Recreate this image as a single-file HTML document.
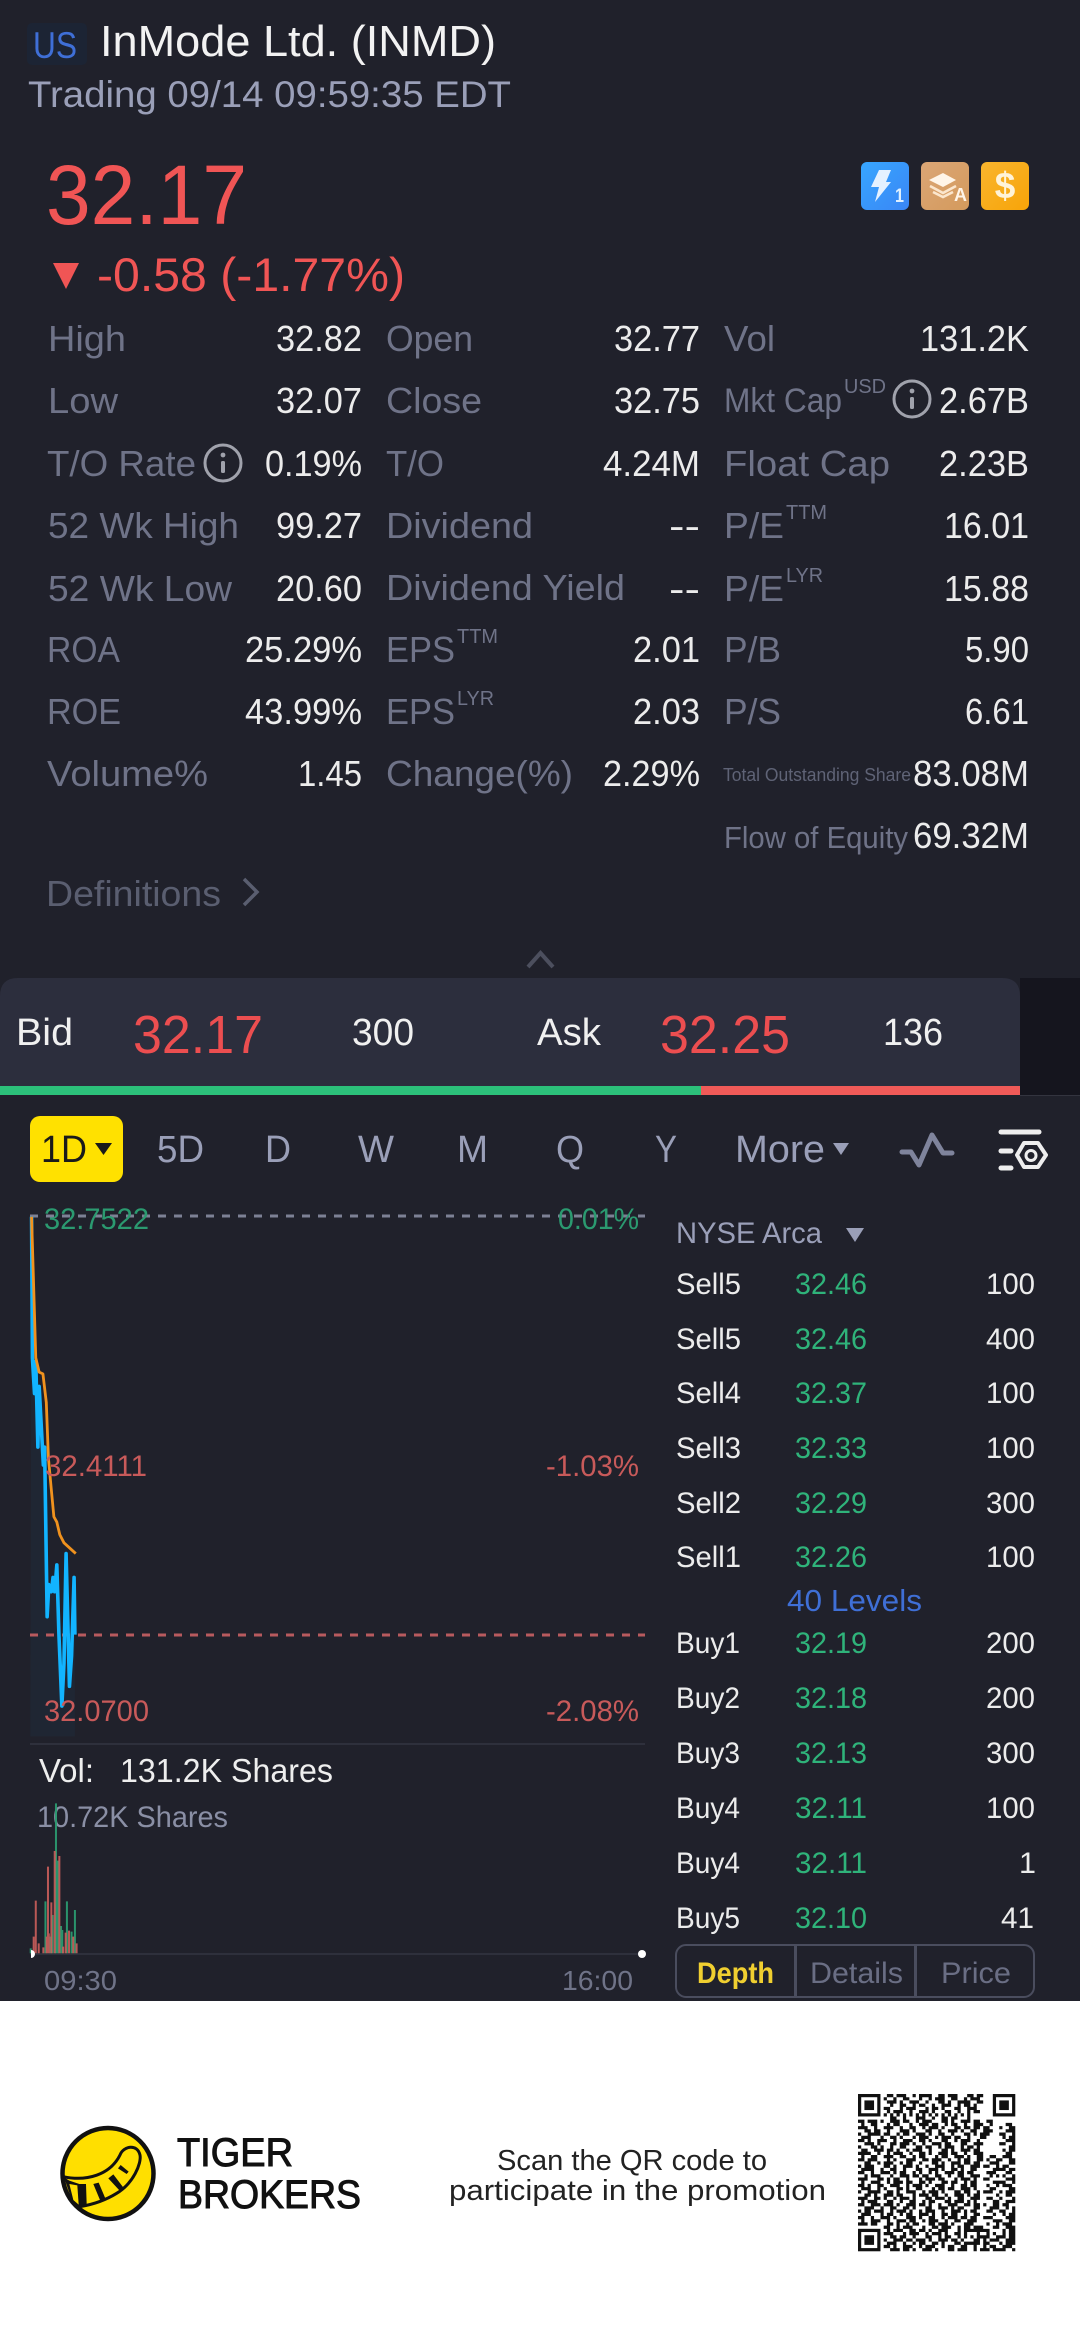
<!DOCTYPE html>
<html>
<head>
<meta charset="utf-8">
<title>InMode Ltd. (INMD)</title>
<style>
html,body{margin:0;padding:0;background:#20212b;width:1080px;height:2346px;overflow:hidden}
svg{display:block}
text{font-family:"Liberation Sans",sans-serif;white-space:pre}
.l{font-size:36px;fill:#6f7388}
.v{font-size:36px;fill:#ececec}
.s{font-size:20px;fill:#6f7388}
.d{font-size:30px;fill:#ececec}
.g{font-size:30px;fill:#2fb37a}
.t{font-size:38px;fill:#9a9fb8}
.cg{font-size:30px;fill:#2b9a70}
.cr{font-size:30px;fill:#c85a5a}
</style>
</head>
<body>
<svg xmlns="http://www.w3.org/2000/svg" width="1080" height="2346" viewBox="0 0 1080 2346">
<defs>
<linearGradient id="b1" x1="0" y1="0" x2="1" y2="1"><stop offset="0" stop-color="#37a6ff"/><stop offset="1" stop-color="#3a86f5"/></linearGradient>
<linearGradient id="b2" x1="0" y1="0" x2="1" y2="1"><stop offset="0" stop-color="#dba676"/><stop offset="1" stop-color="#d49a5c"/></linearGradient>
<linearGradient id="b3" x1="0" y1="0" x2="1" y2="1"><stop offset="0" stop-color="#f9b52e"/><stop offset="1" stop-color="#f8a408"/></linearGradient>
</defs>
<rect width="1080" height="2346" fill="#20212b"/>

<!-- header -->
<rect x="27" y="23" width="60" height="42" rx="5" fill="#1c2434"/>
<text x="33" y="58" font-size="37" fill="#3f6fd6" textLength="44" lengthAdjust="spacingAndGlyphs">US</text>
<text x="100" y="56" font-size="44" fill="#f2f2f2" textLength="396" lengthAdjust="spacingAndGlyphs">InMode Ltd. (INMD)</text>
<text x="28" y="107" font-size="37" fill="#9a9fb8" textLength="483" lengthAdjust="spacingAndGlyphs">Trading 09/14 09:59:35 EDT</text>

<text x="46" y="224" font-size="84" fill="#f05555" textLength="201" lengthAdjust="spacingAndGlyphs">32.17</text>
<polygon points="53,263 79,263 66,289" fill="#f05555"/>
<text x="97" y="291" font-size="47" fill="#f05555" textLength="308" lengthAdjust="spacingAndGlyphs">-0.58 (-1.77%)</text>

<!-- badges -->
<rect x="861" y="162" width="48" height="48" rx="6" fill="url(#b1)"/>
<polygon points="879,170 891,170 886,182 891,182 875,202 879,187 871,187" fill="#e4f1ff"/>
<text x="895" y="202" font-size="19" font-weight="bold" fill="#dff0ff" textLength="9" lengthAdjust="spacingAndGlyphs">1</text>
<rect x="921" y="162" width="48" height="48" rx="6" fill="url(#b2)"/>
<polygon points="943,173 956,180 943,187 929,180" fill="#fff5e8"/>
<path d="M930 186L943 193L956 186M933 192L943 197L953 192" fill="none" stroke="#fbe6cd" stroke-width="2.6"/>
<text x="954" y="201" font-size="18" font-weight="bold" fill="#fff5e8" textLength="13" lengthAdjust="spacingAndGlyphs">A</text>
<rect x="981" y="162" width="48" height="48" rx="6" fill="url(#b3)"/>
<text x="1005" y="198" font-size="37" font-weight="bold" fill="#fff3d8" text-anchor="middle">$</text>

<!-- stats -->
<g>
<text class="l" x="48" y="351" textLength="78" lengthAdjust="spacingAndGlyphs">High</text>
<text class="v" x="276" y="351" textLength="86" lengthAdjust="spacingAndGlyphs">32.82</text>
<text class="l" x="386" y="351" textLength="87" lengthAdjust="spacingAndGlyphs">Open</text>
<text class="v" x="614" y="351" textLength="86" lengthAdjust="spacingAndGlyphs">32.77</text>
<text class="l" x="724" y="351" textLength="51" lengthAdjust="spacingAndGlyphs">Vol</text>
<text class="v" x="920" y="351" textLength="109" lengthAdjust="spacingAndGlyphs">131.2K</text>

<text class="l" x="48" y="413" textLength="70" lengthAdjust="spacingAndGlyphs">Low</text>
<text class="v" x="276" y="413" textLength="86" lengthAdjust="spacingAndGlyphs">32.07</text>
<text class="l" x="386" y="413" textLength="96" lengthAdjust="spacingAndGlyphs">Close</text>
<text class="v" x="614" y="413" textLength="86" lengthAdjust="spacingAndGlyphs">32.75</text>
<text class="l" x="724" y="412" style="font-size:34px" textLength="118" lengthAdjust="spacingAndGlyphs">Mkt Cap</text>
<text class="s" x="844" y="393" textLength="42" lengthAdjust="spacingAndGlyphs">USD</text>
<circle cx="912" cy="399" r="18" fill="none" stroke="#a0a2ac" stroke-width="3"/>
<rect x="910" y="397" width="4" height="12" rx="1.5" fill="#a0a2ac"/><circle cx="912" cy="391" r="2.4" fill="#a0a2ac"/>
<text class="v" x="939" y="413" textLength="90" lengthAdjust="spacingAndGlyphs">2.67B</text>

<text class="l" x="47" y="476" textLength="149" lengthAdjust="spacingAndGlyphs">T/O Rate</text>
<circle cx="223" cy="463" r="18" fill="none" stroke="#a0a2ac" stroke-width="3"/>
<rect x="221" y="461" width="4" height="12" rx="1.5" fill="#a0a2ac"/><circle cx="223" cy="455" r="2.4" fill="#a0a2ac"/>
<text class="v" x="265" y="476" textLength="97" lengthAdjust="spacingAndGlyphs">0.19%</text>
<text class="l" x="386" y="476" textLength="58" lengthAdjust="spacingAndGlyphs">T/O</text>
<text class="v" x="603" y="476" textLength="97" lengthAdjust="spacingAndGlyphs">4.24M</text>
<text class="l" x="724" y="476" textLength="166" lengthAdjust="spacingAndGlyphs">Float Cap</text>
<text class="v" x="939" y="476" textLength="90" lengthAdjust="spacingAndGlyphs">2.23B</text>

<text class="l" x="48" y="538" textLength="191" lengthAdjust="spacingAndGlyphs">52 Wk High</text>
<text class="v" x="276" y="538" textLength="86" lengthAdjust="spacingAndGlyphs">99.27</text>
<text class="l" x="386" y="538" textLength="147" lengthAdjust="spacingAndGlyphs">Dividend</text>
<text class="v" x="669" y="538" textLength="31" lengthAdjust="spacingAndGlyphs">--</text>
<text class="l" x="724" y="538" textLength="60" lengthAdjust="spacingAndGlyphs">P/E</text>
<text class="s" x="786" y="519" textLength="41" lengthAdjust="spacingAndGlyphs">TTM</text>
<text class="v" x="944" y="538" textLength="85" lengthAdjust="spacingAndGlyphs">16.01</text>

<text class="l" x="48" y="601" textLength="184" lengthAdjust="spacingAndGlyphs">52 Wk Low</text>
<text class="v" x="276" y="601" textLength="86" lengthAdjust="spacingAndGlyphs">20.60</text>
<text class="l" x="386" y="600" textLength="239" lengthAdjust="spacingAndGlyphs">Dividend Yield</text>
<text class="v" x="669" y="601" textLength="31" lengthAdjust="spacingAndGlyphs">--</text>
<text class="l" x="724" y="601" textLength="60" lengthAdjust="spacingAndGlyphs">P/E</text>
<text class="s" x="786" y="582" textLength="37" lengthAdjust="spacingAndGlyphs">LYR</text>
<text class="v" x="944" y="601" textLength="85" lengthAdjust="spacingAndGlyphs">15.88</text>

<text class="l" x="47" y="662" textLength="73" lengthAdjust="spacingAndGlyphs">ROA</text>
<text class="v" x="245" y="662" textLength="117" lengthAdjust="spacingAndGlyphs">25.29%</text>
<text class="l" x="386" y="662" textLength="69" lengthAdjust="spacingAndGlyphs">EPS</text>
<text class="s" x="457" y="643" textLength="41" lengthAdjust="spacingAndGlyphs">TTM</text>
<text class="v" x="633" y="662" textLength="67" lengthAdjust="spacingAndGlyphs">2.01</text>
<text class="l" x="724" y="662" textLength="57" lengthAdjust="spacingAndGlyphs">P/B</text>
<text class="v" x="965" y="662" textLength="64" lengthAdjust="spacingAndGlyphs">5.90</text>

<text class="l" x="47" y="724" textLength="74" lengthAdjust="spacingAndGlyphs">ROE</text>
<text class="v" x="245" y="724" textLength="117" lengthAdjust="spacingAndGlyphs">43.99%</text>
<text class="l" x="386" y="724" textLength="69" lengthAdjust="spacingAndGlyphs">EPS</text>
<text class="s" x="457" y="705" textLength="37" lengthAdjust="spacingAndGlyphs">LYR</text>
<text class="v" x="633" y="724" textLength="67" lengthAdjust="spacingAndGlyphs">2.03</text>
<text class="l" x="724" y="724" textLength="57" lengthAdjust="spacingAndGlyphs">P/S</text>
<text class="v" x="965" y="724" textLength="64" lengthAdjust="spacingAndGlyphs">6.61</text>

<text class="l" x="47" y="786" textLength="161" lengthAdjust="spacingAndGlyphs">Volume%</text>
<text class="v" x="298" y="786" textLength="64" lengthAdjust="spacingAndGlyphs">1.45</text>
<text class="l" x="386" y="786" textLength="187" lengthAdjust="spacingAndGlyphs">Change(%)</text>
<text class="v" x="603" y="786" textLength="97" lengthAdjust="spacingAndGlyphs">2.29%</text>
<text x="723" y="781" font-size="18" fill="#5f6376" textLength="188" lengthAdjust="spacingAndGlyphs">Total Outstanding Share</text>
<text class="v" x="913" y="786" textLength="116" lengthAdjust="spacingAndGlyphs">83.08M</text>

<text x="724" y="848" font-size="31" fill="#6f7388" textLength="184" lengthAdjust="spacingAndGlyphs">Flow of Equity</text>
<text class="v" x="913" y="848" textLength="116" lengthAdjust="spacingAndGlyphs">69.32M</text>

<text x="46" y="906" font-size="36" fill="#5a5e70" textLength="175" lengthAdjust="spacingAndGlyphs">Definitions</text>
<path d="M244 879L257 892L244 905" fill="none" stroke="#5a5e70" stroke-width="3.5"/>
</g>

<path d="M528 967L540.500 953L553 967" fill="none" stroke="#4c4f5e" stroke-width="4"/>

<!-- bid ask bar -->
<rect x="1020" y="978" width="60" height="117" fill="#15151e"/>
<path d="M0 996Q0 978 18 978H1002Q1020 978 1020 996V1087H0Z" fill="#2c2e3d"/>
<rect x="0" y="1086" width="701" height="9" fill="#2cc07a"/>
<rect x="701" y="1086" width="319" height="9" fill="#f05a58"/>
<rect x="1020" y="1095" width="60" height="1" fill="#33343f"/>
<text x="16" y="1045" font-size="38" fill="#f0f0f0" textLength="57" lengthAdjust="spacingAndGlyphs">Bid</text>
<text x="133" y="1053" font-size="54" fill="#ec4e50" textLength="130" lengthAdjust="spacingAndGlyphs">32.17</text>
<text x="352" y="1045" font-size="38" fill="#f0f0f0" textLength="62" lengthAdjust="spacingAndGlyphs">300</text>
<text x="537" y="1045" font-size="38" fill="#f0f0f0" textLength="64" lengthAdjust="spacingAndGlyphs">Ask</text>
<text x="660" y="1053" font-size="54" fill="#ec4e50" textLength="130" lengthAdjust="spacingAndGlyphs">32.25</text>
<text x="883" y="1045" font-size="38" fill="#f0f0f0" textLength="60" lengthAdjust="spacingAndGlyphs">136</text>

<!-- tabs -->
<rect x="30" y="1116" width="93" height="66" rx="10" fill="#ffe100"/>
<text x="41" y="1162" font-size="38" fill="#1a1a1a" textLength="46" lengthAdjust="spacingAndGlyphs">1D</text>
<polygon points="95,1143 112,1143 103.500,1155" fill="#1a1a1a"/>
<text class="t" x="157" y="1162" textLength="47" lengthAdjust="spacingAndGlyphs">5D</text>
<text class="t" x="265" y="1162" textLength="26" lengthAdjust="spacingAndGlyphs">D</text>
<text class="t" x="358" y="1162" textLength="36" lengthAdjust="spacingAndGlyphs">W</text>
<text class="t" x="457" y="1162" textLength="31" lengthAdjust="spacingAndGlyphs">M</text>
<text class="t" x="556" y="1162" textLength="28" lengthAdjust="spacingAndGlyphs">Q</text>
<text class="t" x="655" y="1162" textLength="22" lengthAdjust="spacingAndGlyphs">Y</text>
<text class="t" x="735" y="1162" textLength="90" lengthAdjust="spacingAndGlyphs">More</text>
<polygon points="833,1143 849,1143 841,1155" fill="#9a9fb8"/>
<path d="M902 1152H911L919 1165L932 1135L943 1153H952" fill="none" stroke="#7f849c" stroke-width="5" stroke-linecap="round" stroke-linejoin="round"/>
<g fill="none" stroke="#eeeeee" stroke-linecap="round">
<path d="M1001 1132H1039" stroke-width="5"/>
<path d="M1001 1151H1011M1001 1168H1011" stroke-width="5"/>
<polygon points="1017,1155 1024,1143 1038,1143 1046,1155 1038,1167 1024,1167" stroke-width="4" stroke-linejoin="round"/>
<circle cx="1031" cy="1155.500" r="5" stroke-width="3"/>
</g>

<!-- chart -->
<g transform="translate(0,1190) scale(.4209,.3571)">
<polygon points="75,75 77,470 82,570 85,480 90,720 93,550 103,770 106,720 112,1195 116,1105 122,1125 126,1085 130,1125 135,1050 140,1245 147,1445 152,1325 157,1018 165,1390 170,1305 176,1085 178,1245 178,1530 72,1530" fill="#12b4ff" opacity=".04"/>
</g>
<path d="M30 1216H645" stroke="#7d8195" stroke-width="3" stroke-dasharray="8 8" fill="none"/>
<path d="M30 1635H645" stroke="#b85a5e" stroke-width="3" stroke-dasharray="8 8" fill="none"/>
<path d="M30 1744H645" stroke="#2e303c" stroke-width="2" fill="none"/>
<g transform="translate(0,1190) scale(.4209,.3571)" fill="none" stroke-linejoin="round">
<polyline points="75,75 77,470 82,570 85,480 90,720 93,550 103,770 106,720 112,1195 116,1105 122,1125 126,1085 130,1125 135,1050 140,1245 147,1445 152,1325 157,1018 165,1390 170,1305 176,1085 178,1245" stroke="#12b4ff" stroke-width="3.600" vector-effect="non-scaling-stroke"/>
<polyline points="75,75 85,470 93,510 102,515 110,595 115,750 122,840 128,915 135,930 142,965 152,988 180,1018" stroke="#f0921e" stroke-width="2.800" vector-effect="non-scaling-stroke"/>
</g>
<text class="cg" x="44" y="1229" textLength="105" lengthAdjust="spacingAndGlyphs">32.7522</text>
<text class="cg" x="558" y="1229" textLength="81" lengthAdjust="spacingAndGlyphs">0.01%</text>
<text class="cr" x="45" y="1476" textLength="102" lengthAdjust="spacingAndGlyphs">32.4111</text>
<text class="cr" x="546" y="1476" textLength="93" lengthAdjust="spacingAndGlyphs">-1.03%</text>
<text class="cr" x="44" y="1721" textLength="105" lengthAdjust="spacingAndGlyphs">32.0700</text>
<text class="cr" x="546" y="1721" textLength="93" lengthAdjust="spacingAndGlyphs">-2.08%</text>

<text x="39" y="1782" font-size="33" fill="#eeeeee" textLength="55" lengthAdjust="spacingAndGlyphs">Vol:</text>
<text x="120" y="1782" font-size="33" fill="#eeeeee" textLength="213" lengthAdjust="spacingAndGlyphs">131.2K Shares</text>
<text x="37" y="1827" font-size="30" fill="#8a8fa5" textLength="191" lengthAdjust="spacingAndGlyphs">10.72K Shares</text>

<!-- volume bars -->
<path d="M30 1954H645" stroke="#2e303c" stroke-width="2" fill="none"/>
<g transform="translate(0,1740) scale(.4209,.3333)" fill="none">
<g stroke="#2b9a70" opacity=".95" stroke-width="2">
<path vector-effect="non-scaling-stroke" d="M73 640V625M108 640V484M133 640V190M137 640V362M145 640V558M159 640V484M170 640V575M178 640V510M125 640V525M120 640V590M148 640V570"/>
</g>
<g stroke="#d0605c" opacity=".88" stroke-width="2">
<path vector-effect="non-scaling-stroke" d="M80 640V590M85 640V482M92 640V610M103 640V622M114 640V380M122 640V487M130 640V333M141 640V348M150 640V620M156 640V578M164 640V572M174 640V590M182 640V610M116 640V580M111 640V590"/>
</g>
</g>
<path d="M30 1950A4 4 0 0 1 30 1958Z" fill="#ffffff" transform="translate(1,0)"/>
<circle cx="642" cy="1954" r="4" fill="#ffffff"/>
<text x="44" y="1990" font-size="28" fill="#6f7388" textLength="73" lengthAdjust="spacingAndGlyphs">09:30</text>
<text x="562" y="1990" font-size="28" fill="#6f7388" textLength="71" lengthAdjust="spacingAndGlyphs">16:00</text>

<!-- depth -->
<text x="676" y="1243" font-size="30" fill="#9a9fb8" textLength="146" lengthAdjust="spacingAndGlyphs">NYSE Arca</text>
<polygon points="846,1228 864,1228 855,1242" fill="#9a9fb8"/>

<g transform="translate(0,-1)">
<text class="d" x="676" y="1295" textLength="65" lengthAdjust="spacingAndGlyphs">Sell5</text><text class="g" x="795" y="1295" textLength="72" lengthAdjust="spacingAndGlyphs">32.46</text><text class="d" x="986" y="1295" textLength="49" lengthAdjust="spacingAndGlyphs">100</text>
<text class="d" x="676" y="1350" textLength="65" lengthAdjust="spacingAndGlyphs">Sell5</text><text class="g" x="795" y="1350" textLength="72" lengthAdjust="spacingAndGlyphs">32.46</text><text class="d" x="986" y="1350" textLength="49" lengthAdjust="spacingAndGlyphs">400</text>
<text class="d" x="676" y="1404" textLength="65" lengthAdjust="spacingAndGlyphs">Sell4</text><text class="g" x="795" y="1404" textLength="72" lengthAdjust="spacingAndGlyphs">32.37</text><text class="d" x="986" y="1404" textLength="49" lengthAdjust="spacingAndGlyphs">100</text>
<text class="d" x="676" y="1459" textLength="65" lengthAdjust="spacingAndGlyphs">Sell3</text><text class="g" x="795" y="1459" textLength="72" lengthAdjust="spacingAndGlyphs">32.33</text><text class="d" x="986" y="1459" textLength="49" lengthAdjust="spacingAndGlyphs">100</text>
<text class="d" x="676" y="1514" textLength="65" lengthAdjust="spacingAndGlyphs">Sell2</text><text class="g" x="795" y="1514" textLength="72" lengthAdjust="spacingAndGlyphs">32.29</text><text class="d" x="986" y="1514" textLength="49" lengthAdjust="spacingAndGlyphs">300</text>
<text class="d" x="676" y="1568" textLength="65" lengthAdjust="spacingAndGlyphs">Sell1</text><text class="g" x="795" y="1568" textLength="72" lengthAdjust="spacingAndGlyphs">32.26</text><text class="d" x="986" y="1568" textLength="49" lengthAdjust="spacingAndGlyphs">100</text>
<text class="d" x="676" y="1654" textLength="64" lengthAdjust="spacingAndGlyphs">Buy1</text><text class="g" x="795" y="1654" textLength="72" lengthAdjust="spacingAndGlyphs">32.19</text><text class="d" x="986" y="1654" textLength="49" lengthAdjust="spacingAndGlyphs">200</text>
<text class="d" x="676" y="1709" textLength="64" lengthAdjust="spacingAndGlyphs">Buy2</text><text class="g" x="795" y="1709" textLength="72" lengthAdjust="spacingAndGlyphs">32.18</text><text class="d" x="986" y="1709" textLength="49" lengthAdjust="spacingAndGlyphs">200</text>
<text class="d" x="676" y="1764" textLength="64" lengthAdjust="spacingAndGlyphs">Buy3</text><text class="g" x="795" y="1764" textLength="72" lengthAdjust="spacingAndGlyphs">32.13</text><text class="d" x="986" y="1764" textLength="49" lengthAdjust="spacingAndGlyphs">300</text>
<text class="d" x="676" y="1819" textLength="64" lengthAdjust="spacingAndGlyphs">Buy4</text><text class="g" x="795" y="1819" textLength="72" lengthAdjust="spacingAndGlyphs">32.11</text><text class="d" x="986" y="1819" textLength="49" lengthAdjust="spacingAndGlyphs">100</text>
<text class="d" x="676" y="1874" textLength="64" lengthAdjust="spacingAndGlyphs">Buy4</text><text class="g" x="795" y="1874" textLength="72" lengthAdjust="spacingAndGlyphs">32.11</text><text class="d" x="1019" y="1874" textLength="17" lengthAdjust="spacingAndGlyphs">1</text>
<text class="d" x="676" y="1929" textLength="64" lengthAdjust="spacingAndGlyphs">Buy5</text><text class="g" x="795" y="1929" textLength="72" lengthAdjust="spacingAndGlyphs">32.10</text><text class="d" x="1001" y="1929" textLength="33" lengthAdjust="spacingAndGlyphs">41</text>
</g>
<text x="787" y="1611" font-size="31" fill="#3f6fd6" textLength="135" lengthAdjust="spacingAndGlyphs">40 Levels</text>

<rect x="676" y="1945" width="358" height="52" rx="10" fill="none" stroke="#4a4d5e" stroke-width="2"/>
<rect x="794" y="1945" width="3" height="52" fill="#4a4d5e"/>
<rect x="914" y="1945" width="3" height="52" fill="#4a4d5e"/>
<text x="697" y="1983" font-size="30" font-weight="bold" fill="#f0cf30" textLength="77" lengthAdjust="spacingAndGlyphs">Depth</text>
<text x="810" y="1983" font-size="30" fill="#6a6e84" textLength="93" lengthAdjust="spacingAndGlyphs">Details</text>
<text x="941" y="1983" font-size="30" fill="#6a6e84" textLength="70" lengthAdjust="spacingAndGlyphs">Price</text>

<!-- footer -->
<rect x="0" y="2001" width="1080" height="345" fill="#ffffff"/>
<circle cx="108" cy="2173.500" r="45.500" fill="#ffdf00" stroke="#111" stroke-width="4.500"/>
<g transform="translate(30,2060) scale(.3333)">
<path d="M100 350C170 365 240 345 270 285C280 258 322 250 330 285C335 310 310 370 260 400C220 425 180 435 150 440" fill="none" stroke="#111" stroke-width="9"/>
<polygon points="102,352 118,362 148,372 168,372 170,432 148,440 122,410" fill="#111"/>
<polygon points="118,372 142,376 146,434 130,420" fill="#ffdf00"/>
<polygon points="190,372 206,368 226,415 210,420" fill="#111"/>
<polygon points="235,355 250,343 282,385 270,393" fill="#111"/>
<polygon points="264,325 272,315 296,335 290,342" fill="#111"/>
</g>
<text x="177" y="2166" font-size="40" fill="#111" stroke="#111" stroke-width="1" textLength="116" lengthAdjust="spacingAndGlyphs">TIGER</text>
<text x="178" y="2208" font-size="40" fill="#111" stroke="#111" stroke-width="1" textLength="183" lengthAdjust="spacingAndGlyphs">BROKERS</text>
<text x="497" y="2170" font-size="29" fill="#222" textLength="270" lengthAdjust="spacingAndGlyphs">Scan the QR code to</text>
<text x="449" y="2200" font-size="29" fill="#222" textLength="377" lengthAdjust="spacingAndGlyphs">participate in the promotion</text>

<!-- QR -->
<g transform="translate(858,2094) scale(3.210)">
<g fill="none" stroke="#111" stroke-width="1">
<rect x=".5" y=".5" width="6" height="6"/>
<rect x="42.500" y=".5" width="6" height="6"/>
<rect x=".5" y="42.500" width="6" height="6"/>
<path d="
M9 .5h2m1 0h3m2 0h1m1 0h4m2 0h2m1 0h3m3 0h2m1 0h2
M8 1.500h1m2 0h1m2 0h2m3 0h1m2 0h1m1 0h3m2 0h2m2 0h1m1 0h3
M9 2.500h3m1 0h1m2 0h3m2 0h1m3 0h2m1 0h1m2 0h4m2 0h2
M10 3.500h1m2 0h2m2 0h1m1 0h2m2 0h1m2 0h3m2 0h1m1 0h2m1 0h1
M8 4.500h2m3 0h1m1 0h3m3 0h1m1 0h2m1 0h1m3 0h2m2 0h3
M9 5.500h1m1 0h3m2 0h1m2 0h3m1 0h1m3 0h2m2 0h1m2 0h1m1 0h2
M8 6.500h1m1 0h1m1 0h1m1 0h1m1 0h1m1 0h1m1 0h1m1 0h1m1 0h1m1 0h1m1 0h1m1 0h1m1 0h1m1 0h1
M10 7.500h2m2 0h1m3 0h3m2 0h1m2 0h2m1 0h2m3 0h1
M0 8.500h2m1 0h3m1 0h1m2 0h3m1 0h2m2 0h1m1 0h3m3 0h2m1 0h1m2 0h3m1 0h2m2 0h2
M1 9.500h1m2 0h2m3 0h1m1 0h2m3 0h1m2 0h3m1 0h2m2 0h1m1 0h2m2 0h1m2 0h3m2 0h1
M0 10.500h3m2 0h1m2 0h3m2 0h1m2 0h2m2 0h1m1 0h3m1 0h1m3 0h2m1 0h2m1 0h2m1 0h2
M2 11.500h2m1 0h2m2 0h1m3 0h3m1 0h1m3 0h2m2 0h1m2 0h3m1 0h1m2 0h2m2 0h3
M0 12.500h1m2 0h4m1 0h2m2 0h1m1 0h2m2 0h3m1 0h1m2 0h2m2 0h1m3 0h2m1 0h1m1 0h3
M1 13.500h3m3 0h1m2 0h2m1 0h1m3 0h1m1 0h3m2 0h1m1 0h3m1 0h2m2 0h1m3 0h2
M0 14.500h2m1 0h1m2 0h3m2 0h1m2 0h3m2 0h2m1 0h1m3 0h2m2 0h1m1 0h3m2 0h1
M2 15.500h3m1 0h1m3 0h2m1 0h3m1 0h1m2 0h1m2 0h3m1 0h2m3 0h2m2 0h3
M0 16.500h1m3 0h2m1 0h1m2 0h1m2 0h2m3 0h2m1 0h2m2 0h1m1 0h3m2 0h1m1 0h2m1 0h1
M1 17.500h2m2 0h3m1 0h2m1 0h1m2 0h1m1 0h3m2 0h1m3 0h2m1 0h1m2 0h3m1 0h2
M0 18.500h4m2 0h1m2 0h1m1 0h3m2 0h1m2 0h2m1 0h1m2 0h3m1 0h2m2 0h1m2 0h3
M1 19.500h1m2 0h2m2 0h3m2 0h2m2 0h1m1 0h2m3 0h1m1 0h2m2 0h3m1 0h1m2 0h2
M0 20.500h2m1 0h3m3 0h1m1 0h1m3 0h3m2 0h2m1 0h3m2 0h1m2 0h1m1 0h2m2 0h2
M2 21.500h2m2 0h1m1 0h3m2 0h1m1 0h2m2 0h1m3 0h2m1 0h1m2 0h3m1 0h2m1 0h2
M0 22.500h1m1 0h3m3 0h2m1 0h1m2 0h3m1 0h1m2 0h1m2 0h3m2 0h1m1 0h2m2 0h3
M1 23.500h4m2 0h1m2 0h2m2 0h1m3 0h2m2 0h3m1 0h1m2 0h2m1 0h1m2 0h2
M0 24.500h2m2 0h1m2 0h3m1 0h1m1 0h2m2 0h1m1 0h1m2 0h1m1 0h1m2 0h3m1 0h2m1 0h2
M2 25.500h1m1 0h3m3 0h1m2 0h3m1 0h2m1 0h2m2 0h2m2 0h1m2 0h2m2 0h3
M0 26.500h3m3 0h2m1 0h1m1 0h2m2 0h1m3 0h1m1 0h3m1 0h2m3 0h1m1 0h3m1 0h1
M1 27.500h1m2 0h3m2 0h1m1 0h3m1 0h2m2 0h2m1 0h1m3 0h2m1 0h2m2 0h1m1 0h2
M0 28.500h2m1 0h1m2 0h2m2 0h3m2 0h1m1 0h3m1 0h1m2 0h3m2 0h1m2 0h2m1 0h2
M1 29.500h3m2 0h1m1 0h1m3 0h2m1 0h1m2 0h2m3 0h1m1 0h2m1 0h2m2 0h3m1 0h1
M0 30.500h1m2 0h4m2 0h2m1 0h1m2 0h3m2 0h1m1 0h3m1 0h1m3 0h2m1 0h2m2 0h1
M2 31.500h2m1 0h1m2 0h3m1 0h2m3 0h1m1 0h3m1 0h2m2 0h1m2 0h3m1 0h1m1 0h2
M0 32.500h3m2 0h2m1 0h1m2 0h1m1 0h3m1 0h1m3 0h2m1 0h3m1 0h1m2 0h2m2 0h3
M1 33.500h1m1 0h3m3 0h2m2 0h1m2 0h2m2 0h1m1 0h2m3 0h2m1 0h3m1 0h1m1 0h1
M0 34.500h2m2 0h3m1 0h3m1 0h1m2 0h3m1 0h2m1 0h1m2 0h1m2 0h3m2 0h2m1 0h2
M2 35.500h3m2 0h1m2 0h2m2 0h2m1 0h1m3 0h2m2 0h3m1 0h1m1 0h2m3 0h2
M0 36.500h1m1 0h2m1 0h3m2 0h1m1 0h3m1 0h1m2 0h1m1 0h3m2 0h1m2 0h3m1 0h1m1 0h2
M1 37.500h3m3 0h1m1 0h2m2 0h1m1 0h2m2 0h3m1 0h1m2 0h2m1 0h2m2 0h1m2 0h2
M0 38.500h2m2 0h1m2 0h3m1 0h1m3 0h3m1 0h1m2 0h2m2 0h1m1 0h3m1 0h2m1 0h2
M1 39.500h1m2 0h3m2 0h1m2 0h3m1 0h2m2 0h1m1 0h3m2 0h1m2 0h2m2 0h3
M0 40.500h3m1 0h2m3 0h2m1 0h1m2 0h1m1 0h2m3 0h2m1 0h3m1 0h1m3 0h3
M8 41.500h2m2 0h1m1 0h3m3 0h1m2 0h2m1 0h3m2 0h1m1 0h2m1 0h3
M9 42.500h1m1 0h3m2 0h2m1 0h2m1 0h1m2 0h3m3 0h1m1 0h5m1 0h2
M8 43.500h3m3 0h1m1 0h3m2 0h1m1 0h3m1 0h1m2 0h2m1 0h1m3 0h1m2 0h1
M10 44.500h2m1 0h2m2 0h1m3 0h2m2 0h1m1 0h2m2 0h1m1 0h1m1 0h1m1 0h3
M8 45.500h1m2 0h3m1 0h2m1 0h3m1 0h1m2 0h3m1 0h2m1 0h1m3 0h2m1 0h1
M9 46.500h3m2 0h1m2 0h1m1 0h2m2 0h2m1 0h1m3 0h2m1 0h5m1 0h2
M8 47.500h2m1 0h1m2 0h3m2 0h1m1 0h3m2 0h1m1 0h2m2 0h2m2 0h1m2 0h1
M10 48.500h3m1 0h2m1 0h1m2 0h3m1 0h1m3 0h2m1 0h3m2 0h1m1 0h3
M46 9.500h2M44 10.500h1m2 0h2M46 11.500h3M44 12.500h2m2 0h1M45 13.500h1m1 0h2M46 14.500h3
M44 15.500h2m2 0h1M47 16.500h2M45 17.500h1m1 0h2M46 18.500h2M45 19.500h3M44 20.500h1m2 0h2
M47 21.500h2M45 22.500h2M44 23.500h2m1 0h2M46 24.500h2M45 25.500h1m2 0h1M46 26.500h3M44 27.500h2m2 0h1
M45 28.500h3M47 29.500h2M44 30.500h1m1 0h3M46 31.500h2M44 32.500h1m3 0h1M46 33.500h3M45 34.500h2
M46 35.500h1m1 0h1M44 36.500h2m2 0h1M45 37.500h1m1 0h2M46 38.500h3M44 39.500h1m2 0h2M45 40.500h3
M42 41.500h2m2 0h3M38 42.500h2m5 0h1m1 0h2M42 43.500h1m2 0h1m1 0h2M40 44.500h1m2 0h3m1 0h2
M41 45.500h3m2 0h3M44 46.500h1m1 0h3M41 47.500h2m2 0h3M42 48.500h4m2 0h1
M41 19.500h2M40 20.500h1m2 0h1M41 21.500h3M39 22.500h2m2 0h1M42 23.500h2M40 24.500h3M41 25.500h1m1 0h1
M39 26.500h2M42 27.500h2M40 28.500h1m2 0h1M41 29.500h2M39 30.500h3M43 31.500h1M40 32.500h2M42 33.500h2
M39 34.500h1m2 0h2M41 35.500h3M40 36.500h2M42 37.500h1M39 38.500h3M42 39.500h2M40 40.500h1m2 0h1
"/>
</g>
<rect x="2" y="2" width="3" height="3" fill="#111"/>
<rect x="44" y="2" width="3" height="3" fill="#111"/>
<rect x="2" y="44" width="3" height="3" fill="#111"/>
</g>
</svg>
</body>
</html>
